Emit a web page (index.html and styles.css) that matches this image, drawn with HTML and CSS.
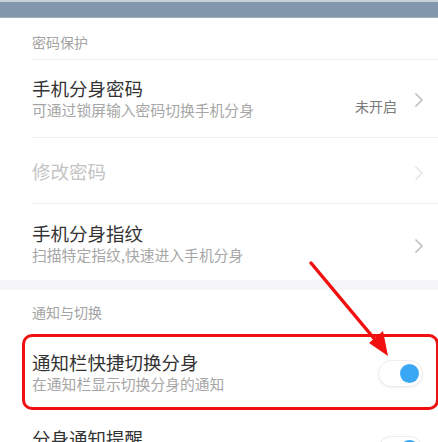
FILE: index.html
```html
<!DOCTYPE html>
<html lang="zh-CN">
<head>
<meta charset="utf-8">
<link rel="stylesheet" href="styles.css">
</head>
<body>
<div class="screen">
  <div class="topbar"></div>

  <div class="section-head">密码保护</div>

  <div class="row divided">
    <div class="texts">
      <div class="title">手机分身密码</div>
      <div class="sub">可通过锁屏输入密码切换手机分身</div>
    </div>
    <div class="value">未开启</div>
    <svg class="chev" width="10" height="16" viewBox="0 0 10 16"><path d="M1.5 1.5 L8 8 L1.5 14.5" fill="none" stroke="#bdbdbd" stroke-width="1.5"/></svg>
  </div>

  <div class="row divided single">
    <div class="texts">
      <div class="title disabled">修改密码</div>
    </div>
    <svg class="chev" width="10" height="16" viewBox="0 0 10 16"><path d="M1.5 1.5 L8 8 L1.5 14.5" fill="none" stroke="#e6e6e6" stroke-width="1.5"/></svg>
  </div>

  <div class="row last">
    <div class="texts">
      <div class="title">手机分身指纹</div>
      <div class="sub">扫描特定指纹,快速进入手机分身</div>
    </div>
    <svg class="chev" width="10" height="16" viewBox="0 0 10 16"><path d="M1.5 1.5 L8 8 L1.5 14.5" fill="none" stroke="#bdbdbd" stroke-width="1.5"/></svg>
  </div>

  <div class="gap"></div>

  <div class="section-head second">通知与切换</div>

  <div class="row toggle-row highlight">
    <div class="texts">
      <div class="title">通知栏快捷切换分身</div>
      <div class="sub">在通知栏显示切换分身的通知</div>
    </div>
    <div class="toggle on"><span class="knob"></span></div>
    <div class="redbox"></div>
  </div>

  <div class="row toggle-row">
    <div class="texts">
      <div class="title">分身通知提醒</div>
      <div class="sub">分身收到通知时提醒</div>
    </div>
    <div class="toggle on"><span class="knob"></span></div>
  </div>

  <svg class="arrow" width="438" height="442" viewBox="0 0 438 442">
    <line x1="311" y1="263" x2="377" y2="342" stroke="#f01010" stroke-width="3.5" stroke-linecap="round"/>
    <polygon points="388,356 369,343 383,331" fill="#f01010"/>
  </svg>
</div>
</body>
</html>
```

FILE: styles.css
```css
* { box-sizing: border-box; }
html, body { margin: 0; padding: 0; }
body {
  background: #ffffff;
  font-family: "Noto Sans CJK SC", "Noto Sans", sans-serif;
  width: 438px;
  height: 442px;
  overflow: hidden;
}
.screen {
  position: relative;
  width: 438px;
  height: 442px;
  overflow: hidden;
  background: #fff;
}
.topbar {
  height: 18px;
  background: #8397ac;
  border-top: 2px solid #c8d0da;
  border-bottom: 1px solid #9fb0c0;
}
.section-head {
  margin-left: 32px;
  padding: 14px 0 7px;
  font-size: 14px;
  line-height: 20px;
  color: #a3a3a3;
  border-bottom: 1px solid #efefef;
}
.section-head.second {
  padding: 12px 0 12px;
  border-bottom: none;
}
.row {
  position: relative;
  display: flex;
  align-items: center;
  margin-left: 32px;
  padding: 16px 14px 17px 0;
}
.row.divided { border-bottom: 1px solid #efefef; }
.row.single { padding: 21px 14px 20px 0; }
.row.last { padding: 17px 14px 15px 0; }
.texts { flex: 1; min-width: 0; }
.title {
  font-size: 18.5px;
  line-height: 24px;
  color: #333333;
  white-space: nowrap;
}
.title.disabled { color: #c4c4c4; }
.sub {
  font-size: 14.8px;
  line-height: 20px;
  color: #a6a6a6;
  white-space: nowrap;
}
.value {
  font-size: 14px;
  color: #7a7a7a;
  margin-right: 17px;
  margin-top: 16px;
}
.chev { flex: none; margin-top: 4px; }
.row.last .chev { margin-top: 6px; }
.gap {
  height: 10px;
  background: #f6f6f8;
}
.toggle-row { padding: 16px 15px 16px 0; }
.toggle {
  flex: none;
  width: 45px;
  height: 27px;
  border-radius: 14px;
  background: #fff;
  border: 1px solid #ececec;
  box-shadow: 0 1px 2px rgba(0,0,0,0.06);
  position: relative;
  margin-top: 2px;
}
.knob {
  position: absolute;
  right: 3px;
  top: 3px;
  width: 19px;
  height: 19px;
  border-radius: 50%;
  background: #3aa7f4;
}
.redbox {
  position: absolute;
  left: -10px;
  right: -1px;
  top: 0;
  bottom: 0;
  border: 3px solid #f01010;
  border-radius: 10px;
  pointer-events: none;
}
.arrow {
  position: absolute;
  left: 0;
  top: 0;
  pointer-events: none;
}
```
